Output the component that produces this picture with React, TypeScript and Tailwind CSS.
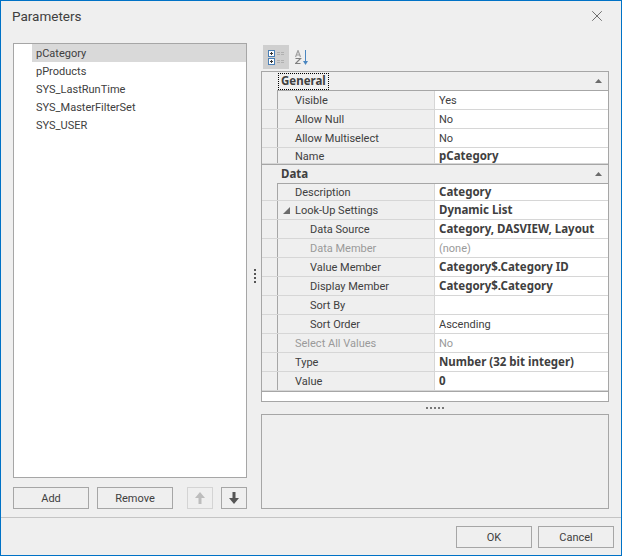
import { X } from "lucide-react";

const font = "font-['Roboto',sans-serif]";
const edge = "border-[#a6a6a6]";
const boldText = "font-['Noto_Sans',sans-serif] text-[11.5px] font-bold";

type Row = { label: string; value?: string; h: string; level?: 1 | 2; bold?: boolean; dim?: boolean; open?: boolean };

const general: Row[] = [
  { label: "Visible", value: "Yes", h: "h-[19px]" },
  { label: "Allow Null", value: "No", h: "h-[19px]" },
  { label: "Allow Multiselect", value: "No", h: "h-[19px]" },
  { label: "Name", value: "pCategory", h: "h-[16px] [&>div]:pt-[1px]", bold: true },
];

const data: Row[] = [
  { label: "Description", value: "Category", h: "h-[17px]", bold: true },
  { label: "Look-Up Settings", value: "Dynamic List", h: "h-[19px]", bold: true, open: true },
  { label: "Data Source", value: "Category, DASVIEW, Layout", h: "h-[19px]", level: 2, bold: true },
  { label: "Data Member", value: "(none)", h: "h-[19px]", level: 2, dim: true },
  { label: "Value Member", value: "Category$.Category ID", h: "h-[19px]", level: 2, bold: true },
  { label: "Display Member", value: "Category$.Category", h: "h-[19px]", level: 2, bold: true },
  { label: "Sort By", value: "", h: "h-[19px]", level: 2 },
  { label: "Sort Order", value: "Ascending", h: "h-[19px]", level: 2 },
  { label: "Select All Values", value: "No", h: "h-[19px]", dim: true },
  { label: "Type", value: "Number (32 bit integer)", h: "h-[19px]", bold: true },
  { label: "Value", value: "0", h: "h-[19px]", bold: true },
];

const params = ["pCategory", "pProducts", "SYS_LastRunTime", "SYS_MasterFilterSet", "SYS_USER"];

const UpCaret = () => (
  <svg width="7" height="4" viewBox="0 0 7 4" className="mr-[6px]">
    <path d="M3.5 0 L7 4 L0 4 Z" fill="#6b6b6b" />
  </svg>
);

const CategoryIcon = () => (
  <svg width="16" height="15" viewBox="0 0 16 15">
    <rect x="0.5" y="0.5" width="6" height="6" fill="#fff" stroke="#4a7fb5" />
    <rect x="0.5" y="8.5" width="6" height="6" fill="#fff" stroke="#4a7fb5" />
    <path d="M2 3.5h3M3.5 2v3M2 11.5h3M3.5 10v3" stroke="#333" />
    <path d="M9 2.5h3M13 2.5h3M9 4.5h3M13 4.5h3M9 10.5h3M13 10.5h3M9 12.5h3M13 12.5h3" stroke="#b0b0b0" />
  </svg>
);

const SortIcon = () => (
  <svg width="14" height="15" viewBox="0 0 14 15">
    <path d="M0.5 7 L3 0.5 L5.5 7 M1.3 5 H4.7" fill="none" stroke="#a0a0a0" strokeWidth="1.2" />
    <path d="M0.5 8.5 H5.5 L0.5 13.5 H5.5" fill="none" stroke="#808080" strokeWidth="1.2" />
    <path d="M10.5 0 V12" stroke="#4a86c0" strokeWidth="1" />
    <path d="M8 11 L10.5 15 L13 11 Z" fill="#4a86c0" />
  </svg>
);

const ArrowIcon = ({ down, color }: { down?: boolean; color: string }) => (
  <svg width="10" height="12" viewBox="0 0 10 12" className={down ? "rotate-180" : ""}>
    <path d="M5 0 L10 6 H6.5 V12 H3.5 V6 H0 Z" fill={color} />
  </svg>
);

const GridRow = ({ row }: { row: Row }) => (
  <div className={`flex ${row.h} border-b border-[#d6d6d6] last:border-b-0`}>
    <div className="w-[15px] shrink-0 bg-[#efefef]" />
    <div
      className={`relative flex w-[158px] shrink-0 items-center border-x ${edge} border-r-[#d6d6d6] bg-[#efefef] ${
        row.level === 2 ? "pl-[32px]" : "pl-[17px]"
      } ${row.dim ? "text-[#9a9a9a]" : ""}`}
    >
      {row.open && (
        <svg width="7" height="7" viewBox="0 0 7 7" className="absolute left-[5px] top-[6px]">
          <path d="M7 0 V7 H0 Z" fill="#6b6b6b" />
        </svg>
      )}
      {row.label}
    </div>
    <div
      className={`flex flex-1 items-center bg-white pl-[4px] ${row.bold ? boldText : ""} ${
        row.dim ? "text-[#9a9a9a]" : ""
      }`}
    >
      {row.value}
    </div>
  </div>
);

const GroupHeader = ({ title, focus }: { title: string; focus?: boolean }) => (
  <div className="flex h-[19px] items-center bg-[#efefef]">
    <div className="w-[15px] shrink-0" />
    <div className={`flex h-full flex-1 items-center justify-between border-b ${edge} pl-[1px]`}>
      <span
        className={`flex h-[17px] items-center px-[2px] ${boldText} ${
          focus ? "border border-dotted border-black" : "border border-transparent"
        }`}
      >
        {title}
      </span>
      <UpCaret />
    </div>
  </div>
);

const FlatButton = ({ label, width }: { label: string; width: string }) => (
  <button className={`flex h-[22px] ${width} items-center justify-center border ${edge}`}>{label}</button>
);

export default function App() {
  return (
    <div className={`flex h-[556px] w-[622px] flex-col border border-[#0072c6] bg-[#efefef] text-[11px] leading-none text-[#404040] ${font}`}>
      {/* Title */}
      <div className="flex h-[42px] shrink-0 items-start justify-between pl-[11px] pr-[15px] pt-[6px]">
        <span className="pt-[1px] text-[13.5px] leading-[16px]">Parameters</span>
        <X size={18} strokeWidth={1} color="#444" />
      </div>

      <div className="flex h-[466px] shrink-0 px-[12px]">
        {/* Parameter list */}
        <div className="flex w-[234px] shrink-0 flex-col">
          <div className={`h-[435px] border ${edge} bg-white`}>
            {params.map((p, i) => (
              <div
                key={p}
                className={`ml-[18px] flex h-[18px] items-center pl-[4px] ${i === 0 ? "bg-[#d9d9d9]" : ""}`}
              >
                {p}
              </div>
            ))}
          </div>
          <div className="mt-[9px] flex">
            <FlatButton label="Add" width="w-[76px]" />
            <div className="ml-[8px]">
              <FlatButton label="Remove" width="w-[76px]" />
            </div>
            <button className="ml-[14px] flex h-[22px] w-[26px] items-center justify-center border border-[#d4d4d4]">
              <ArrowIcon color="#bdbdbd" />
            </button>
            <button className={`ml-[8px] flex h-[22px] w-[26px] items-center justify-center border ${edge}`}>
              <ArrowIcon down color="#555" />
            </button>
          </div>
        </div>

        {/* Vertical splitter */}
        <div className="flex w-[14px] shrink-0 flex-col items-center justify-center gap-[2px] pl-[2px]">
          <span className="size-[2px] bg-[#555]" />
          <span className="size-[2px] bg-[#555]" />
          <span className="size-[2px] bg-[#555]" />
          <span className="size-[2px] bg-[#555]" />
        </div>

        {/* Property grid */}
        <div className="flex w-[348px] shrink-0 flex-col">
          <div className="flex h-[28px] shrink-0 items-start gap-[6px] pl-[2px] pt-[2px]">
            <div className="flex h-[24px] w-[26px] items-center justify-center bg-[#cfcfcf]">
              <CategoryIcon />
            </div>
            <div className="flex h-[24px] items-center">
              <SortIcon />
            </div>
          </div>
          <div className={`flex h-[331px] shrink-0 flex-col border ${edge} bg-white`}>
            <GroupHeader title="General" focus />
            {general.map((r) => (
              <GridRow key={r.label} row={r} />
            ))}
            <div className={`border-b ${edge}`} />
            <GroupHeader title="Data" />
            {data.map((r) => (
              <GridRow key={r.label} row={r} />
            ))}
            <div className={`border-b ${edge}`} />
          </div>
          <div className="flex h-[12px] shrink-0 items-center justify-center gap-[2px]">
            <span className="size-[2px] bg-[#777]" />
            <span className="size-[2px] bg-[#777]" />
            <span className="size-[2px] bg-[#777]" />
            <span className="size-[2px] bg-[#777]" />
            <span className="size-[2px] bg-[#777]" />
          </div>
          <div className={`h-[95px] shrink-0 border ${edge}`} />
        </div>
      </div>

      {/* Footer */}
      <div className="mt-[8px] flex flex-1 items-start justify-end gap-[6px] border-t border-[#c4c4c4] pr-[7px] pt-[8px]">
        <FlatButton label="OK" width="w-[76px]" />
        <FlatButton label="Cancel" width="w-[76px]" />
      </div>
    </div>
  );
}
